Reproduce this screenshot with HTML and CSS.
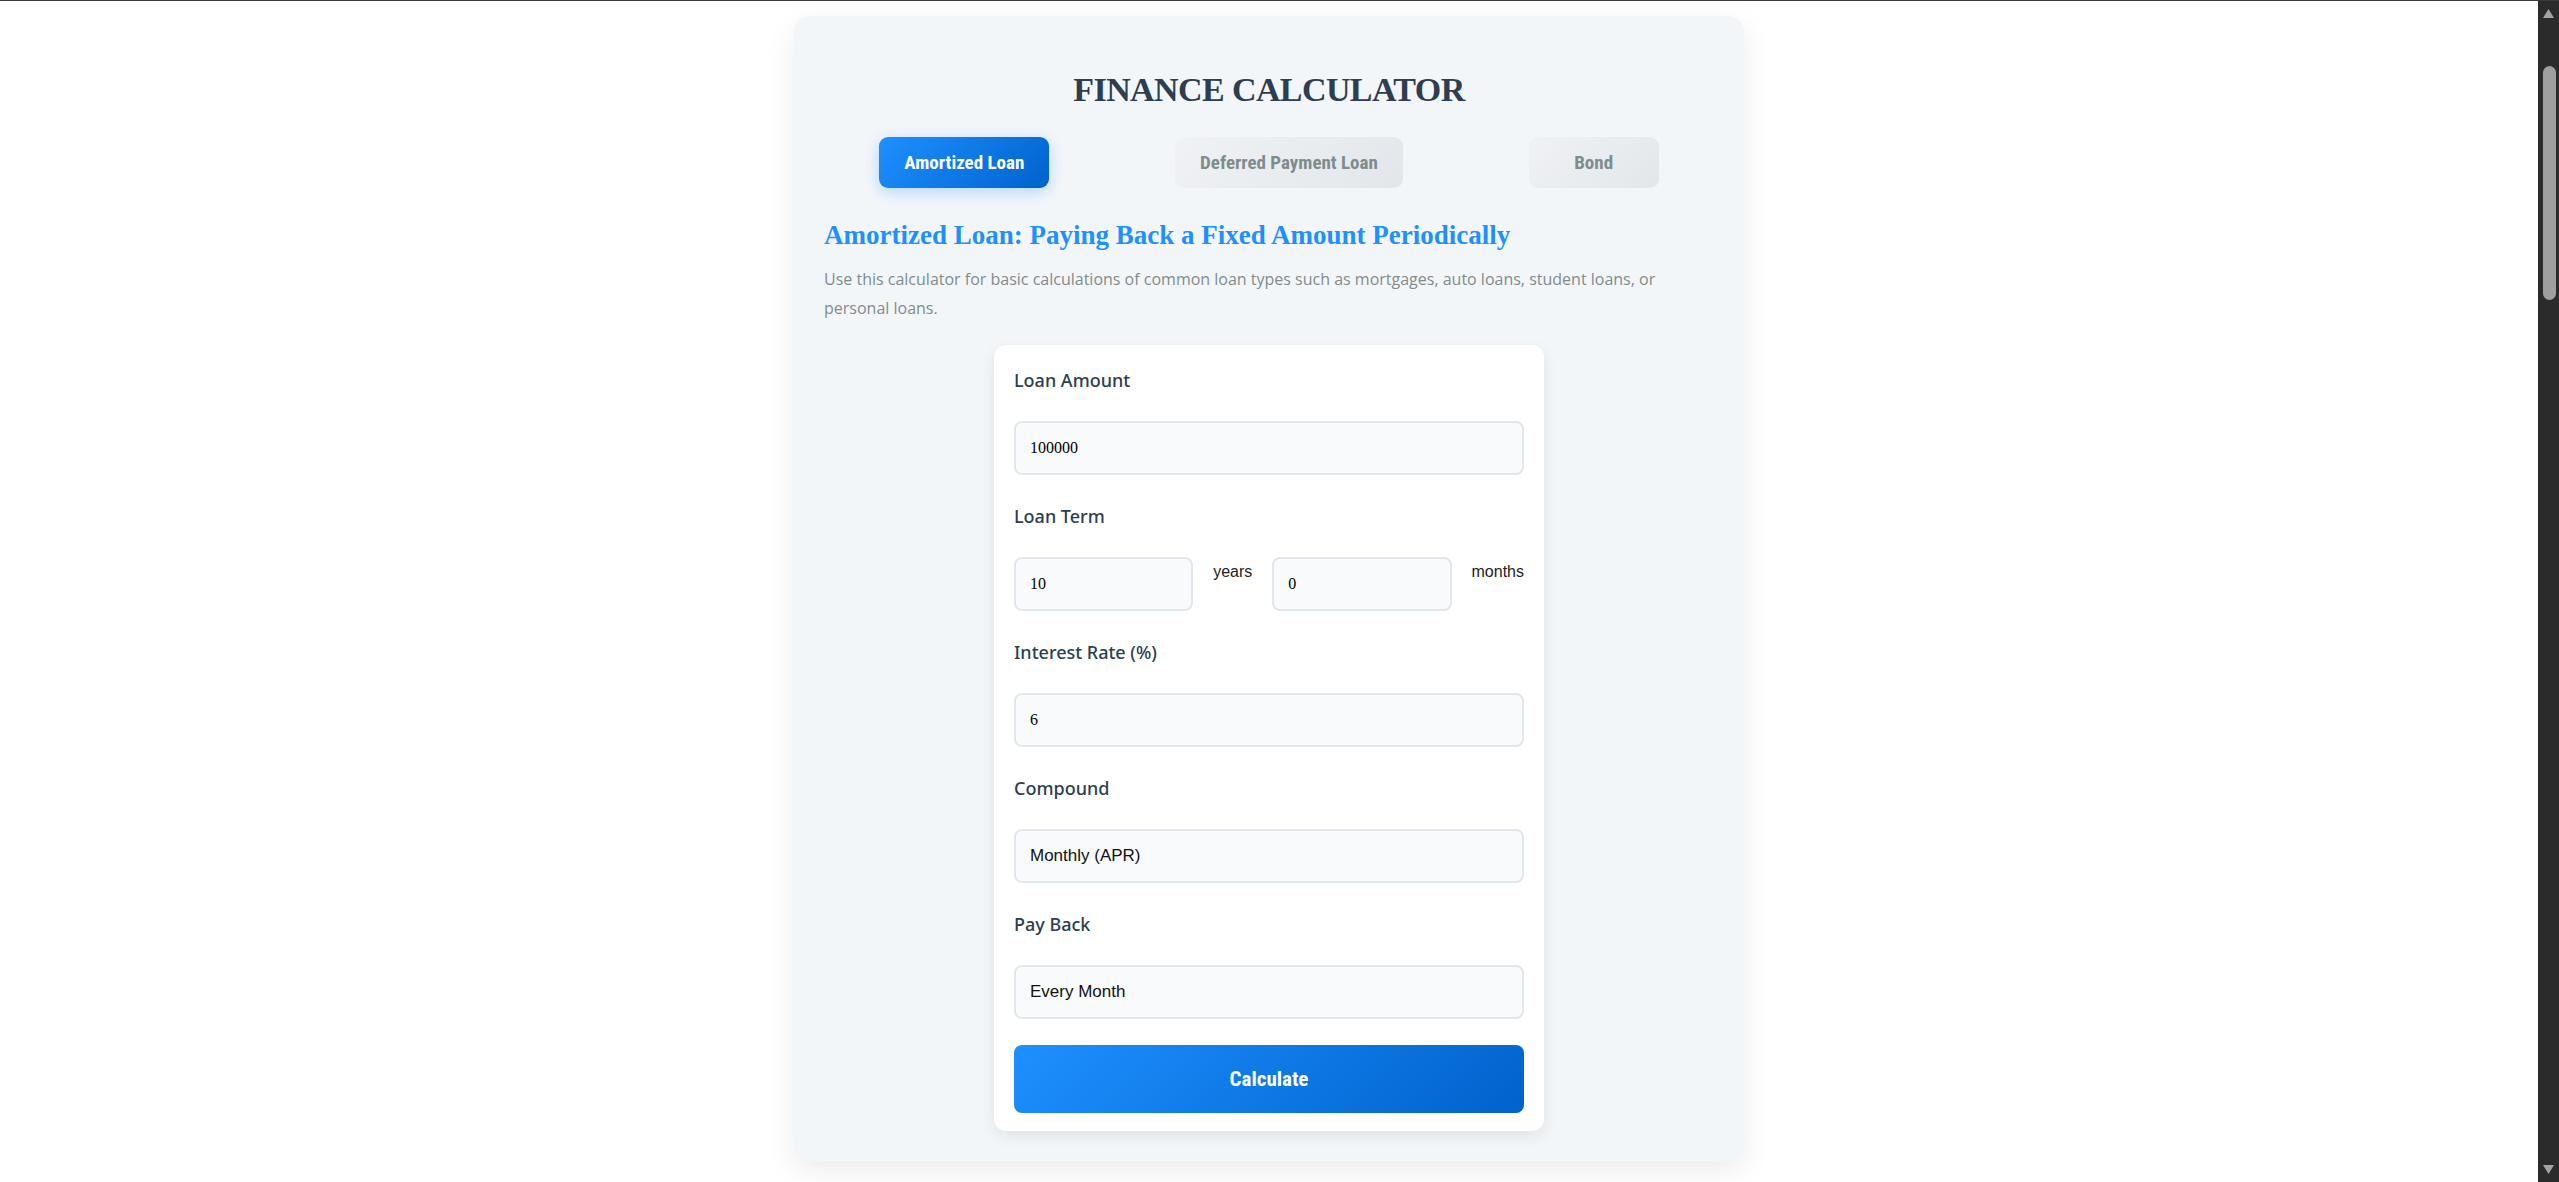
FILE: index.html
```html
<!DOCTYPE html>
<html lang="en">
<head>
<meta charset="utf-8">
<title>Finance Calculator</title>
<link rel="stylesheet" href="styles.css">
</head>
<body>
<div class="page">
<main class="calc">
  <h1 class="calc-title">FINANCE CALCULATOR</h1>
  <nav class="tabs">
    <button class="tab tab-active">Amortized Loan</button>
    <button class="tab">Deferred Payment Loan</button>
    <button class="tab tab-bond">Bond</button>
  </nav>
  <h2 class="section-title">Amortized Loan: Paying Back a Fixed Amount Periodically</h2>
  <p class="section-desc">Use this calculator for basic calculations of common loan types such as mortgages, auto loans, student loans, or personal loans.</p>
  <form class="form-card">
    <div class="group">
      <label class="field-label">Loan Amount</label>
      <input class="field" type="text" value="100000">
    </div>
    <div class="group">
      <label class="field-label">Loan Term</label>
      <div class="term-row">
        <input class="field" type="text" value="10">
        <span class="unit">years</span>
        <input class="field" type="text" value="0">
        <span class="unit">months</span>
      </div>
    </div>
    <div class="group">
      <label class="field-label">Interest Rate (%)</label>
      <input class="field" type="text" value="6">
    </div>
    <div class="group">
      <label class="field-label">Compound</label>
      <select class="field field-select">
        <option>Monthly (APR)</option>
      </select>
    </div>
    <div class="group group-last">
      <label class="field-label">Pay Back</label>
      <select class="field field-select">
        <option>Every Month</option>
      </select>
    </div>
    <button class="calc-btn" type="button">Calculate</button>
  </form>
</main>
</div>
<div class="scrollbar" aria-hidden="true">
  <svg class="sb-arrow" width="21" height="21" viewBox="0 0 21 21"><path d="M5 17 L10.5 8 L16 17 Z" fill="#a3a3a3"/></svg>
  <div class="sb-track"><div class="sb-thumb"></div></div>
  <svg class="sb-arrow" width="21" height="21" viewBox="0 0 21 21"><path d="M5 4 L16 4 L10.5 13 Z" fill="#a3a3a3"/></svg>
</div>
</body>
</html>
```
FILE: styles.css
```css
html {
  border-top: 1px solid #3a3a3a;
  background: #ffffff;
}
body {
  margin: 0;
  display: flex;
  height: calc(100vh - 1px);
  overflow: hidden;
  background: #ffffff;
  font-family: "Open Sans", "Noto Sans", sans-serif;
}
.page {
  flex: 1;
  min-width: 0;
  padding-top: 15px;
}
.scrollbar {
  width: 21px;
  flex: none;
  display: flex;
  flex-direction: column;
  background: #2b2b2b;
}
.sb-arrow {
  display: block;
  flex: none;
}
.sb-track {
  flex: 1;
  padding-top: 44px;
}
.sb-thumb {
  width: 13px;
  height: 234px;
  margin-left: 5px;
  border-radius: 7px;
  background: #9f9f9f;
}
.calc {
  width: 950px;
  box-sizing: border-box;
  margin: 0 auto;
  padding: 30px 30px 30px;
  background: #f3f6f9;
  border-radius: 16px;
  box-shadow: 0 10px 30px rgba(0, 0, 0, 0.08);
}
.calc-title {
  margin: 25px 0 28px;
  font-family: "Liberation Serif", serif;
  font-weight: 700;
  font-size: 34px;
  line-height: 38px;
  letter-spacing: -0.6px;
  color: #2c3e50;
  text-align: center;
}
.tabs {
  display: flex;
  justify-content: space-around;
  gap: 15px;
}
.tab {
  min-width: 130px;
  padding: 14px 25px;
  border: none;
  border-radius: 9px;
  font-family: "Roboto Condensed", "Liberation Sans Narrow", "Roboto", sans-serif;
  font-weight: 700;
  font-size: 19px;
  line-height: 23px;
  color: #7f8c8d;
  background: linear-gradient(135deg, #f0f2f5, #e2e6ea);
}
.tab-active {
  color: #ffffff;
  background: linear-gradient(135deg, #1e90ff, #0062cc);
  box-shadow: 0 4px 15px rgba(30, 144, 255, 0.3);
}
.section-title {
  margin: 32px 0 15px;
  font-family: "Liberation Serif", serif;
  font-weight: 700;
  font-size: 27px;
  line-height: 30px;
  color: #1e90ff;
}
.section-desc {
  margin: 0 0 22px;
  font-size: 16px;
  line-height: 28.8px;
  color: #7f8c8d;
}
.form-card {
  width: 550px;
  box-sizing: border-box;
  margin: 0 auto;
  padding: 24px 20px 18px;
  background: #ffffff;
  border-radius: 12px;
  box-shadow: 0 5px 15px rgba(0, 0, 0, 0.08);
}
.group {
  margin-bottom: 30px;
}
.group-last {
  margin-bottom: 26px;
}
.field-label {
  display: block;
  margin-bottom: 29px;
  font-family: "Noto Sans", "Open Sans", sans-serif;
  font-size: 18px;
  font-weight: 500;
  line-height: 23px;
  color: #2c3e50;
}
.field {
  display: block;
  width: 100%;
  height: 54px;
  box-sizing: border-box;
  padding: 0 14px;
  border: 2px solid #e2e7ee;
  border-radius: 8px;
  background: #f8fafc;
  font-family: "Liberation Serif", serif;
  font-size: 16px;
  color: #000000;
  outline: none;
}
.field-select {
  appearance: none;
  -webkit-appearance: none;
  font-family: "Liberation Sans", Arial, sans-serif;
  font-size: 17px;
  color: #111111;
}
.term-row {
  display: flex;
  align-items: flex-start;
  gap: 20px;
}
.term-row .field {
  flex: 1;
  min-width: 0;
}
.unit {
  padding-top: 6px;
  font-family: "Liberation Sans", Arial, sans-serif;
  font-size: 16px;
  color: #222222;
}
.calc-btn {
  display: block;
  width: 100%;
  height: 68px;
  border: none;
  border-radius: 8px;
  background: linear-gradient(135deg, #1e90ff, #0062cc);
  font-family: "Roboto Condensed", "Liberation Sans Narrow", "Roboto", sans-serif;
  font-weight: 700;
  font-size: 21px;
  color: #ffffff;
}
```
